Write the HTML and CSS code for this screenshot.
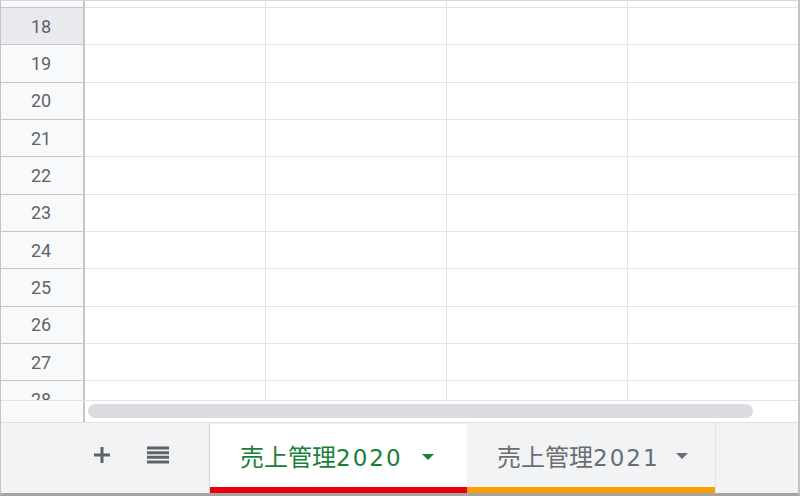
FILE: index.html
```html
<!DOCTYPE html>
<html lang="ja">
<head>
<meta charset="utf-8">
<link rel="stylesheet" href="styles.css">
</head>
<body>
<div class="sheet">
  <div class="grid">
    <div class="row top"><div class="rh"></div><div class="c"></div><div class="c"></div><div class="c"></div><div class="c last"></div></div>
    <div class="row"><div class="rh sel">18</div><div class="c"></div><div class="c"></div><div class="c"></div><div class="c last"></div></div>
    <div class="row"><div class="rh">19</div><div class="c"></div><div class="c"></div><div class="c"></div><div class="c last"></div></div>
    <div class="row"><div class="rh">20</div><div class="c"></div><div class="c"></div><div class="c"></div><div class="c last"></div></div>
    <div class="row"><div class="rh">21</div><div class="c"></div><div class="c"></div><div class="c"></div><div class="c last"></div></div>
    <div class="row"><div class="rh">22</div><div class="c"></div><div class="c"></div><div class="c"></div><div class="c last"></div></div>
    <div class="row"><div class="rh">23</div><div class="c"></div><div class="c"></div><div class="c"></div><div class="c last"></div></div>
    <div class="row"><div class="rh">24</div><div class="c"></div><div class="c"></div><div class="c"></div><div class="c last"></div></div>
    <div class="row"><div class="rh">25</div><div class="c"></div><div class="c"></div><div class="c"></div><div class="c last"></div></div>
    <div class="row"><div class="rh">26</div><div class="c"></div><div class="c"></div><div class="c"></div><div class="c last"></div></div>
    <div class="row"><div class="rh">27</div><div class="c"></div><div class="c"></div><div class="c"></div><div class="c last"></div></div>
    <div class="row"><div class="rh">28</div><div class="c"></div><div class="c"></div><div class="c"></div><div class="c last"></div></div>
  </div>
  <div class="hscroll">
    <div class="rh-blank"></div>
    <div class="track"><div class="thumb"></div></div>
  </div>
  <div class="tabbar">
    <div class="tools">
      <svg class="ico plus" width="18" height="18" viewBox="0 0 18 18"><path d="M9 1v16M1 9h16" stroke="#5f6368" stroke-width="3" fill="none"/></svg>
      <svg class="ico menu" width="22" height="18" viewBox="0 0 22 18"><path d="M0 2h22M0 6.7h22M0 11.3h22M0 16h22" stroke="#5f6368" stroke-width="3" fill="none"/></svg>
    </div>
    <div class="tab active">
      <span class="name">売上管理<span class="num">2020</span></span>
      <span class="caret"></span>
    </div>
    <div class="tab second">
      <span class="name">売上管理<span class="num">2021</span></span>
      <span class="caret"></span>
    </div>
    <div class="rest"></div>
  </div>
</div>
</body>
</html>
```
FILE: styles.css
```css
html, body {
  margin: 0;
  padding: 0;
  background: #ffffff;
}
.sheet {
  width: 800px;
  height: 496px;
  box-sizing: border-box;
  border-top: 1px solid #d6d6d6;
  border-left: 1px solid #c4c4c4;
  border-right: 2px solid #c4c4c4;
  border-bottom: 3px solid #a4a4a4;
  display: flex;
  flex-direction: column;
  overflow: hidden;
  font-family: Roboto, "Liberation Sans", Arial, sans-serif;
}
.grid {
  height: 399px;
  overflow: hidden;
  flex: none;
}
.row {
  display: flex;
  height: 37.33px;
  box-sizing: border-box;
}
.row.top {
  height: 7px;
}
.rh {
  width: 84px;
  flex: none;
  box-sizing: border-box;
  background: #f8f9fa;
  border-right: 2px solid #c6c6c6;
  border-bottom: 1px solid #c6c6c6;
  color: #5f6368;
  font-size: 18px;
  display: flex;
  align-items: center;
  justify-content: center;
  padding-right: 2px;
}
.rh.sel {
  background: #e8eaed;
}
.c {
  width: 181px;
  flex: none;
  box-sizing: border-box;
  border-right: 1px solid #e2e3e3;
  border-bottom: 1px solid #e2e3e3;
}
.c.last {
  flex: 1;
  border-right: none;
}
.hscroll {
  height: 22px;
  flex: none;
  display: flex;
  border-top: 1px solid #e2e3e3;
  box-sizing: border-box;
}
.rh-blank {
  width: 84px;
  flex: none;
  box-sizing: border-box;
  background: #f8f9fa;
  border-right: 2px solid #c6c6c6;
}
.track {
  flex: 1;
  padding: 3px 0 0 3px;
}
.thumb {
  width: 665px;
  height: 14px;
  border-radius: 7px;
  background: #dadce0;
}
.tabbar {
  flex: 1;
  display: flex;
  background: #f1f3f4;
  border-top: 1px solid #e0e0e0;
}
.tools {
  width: 209px;
  flex: none;
  display: flex;
  align-items: center;
  padding-bottom: 6px;
  box-sizing: border-box;
}
.ico.plus {
  margin-left: 92px;
}
.ico.menu {
  margin-left: 36px;
}
.tab {
  display: flex;
  align-items: center;
  box-sizing: border-box;
  padding: 0 0 6px 30px;
  position: relative;
  font-family: "Noto Sans CJK JP", "Noto Sans", sans-serif;
  font-size: 24px;
}
.tab::after {
  content: "";
  position: absolute;
  left: 0;
  right: 0;
  bottom: 0;
  height: 6px;
}
.tab.active {
  width: 257px;
  background: #ffffff;
  color: #188038;
  margin-top: 1px;
  box-shadow: -1px 0 1px rgba(0,0,0,0.12);
}
.tab.active::after {
  background: #e8000b;
}
.tab.second {
  width: 249px;
  color: #6a6e72;
  border-right: 1px solid #e3e5e6;
}
.tab.second::after {
  background: #f9a000;
}
.num {
  font-family: "DejaVu Sans", "Noto Sans", sans-serif;
  font-size: 23px;
  letter-spacing: 2px;
}
.tab.active .caret {
  margin-left: 19px;
}
.caret {
  width: 0;
  height: 0;
  border-left: 6px solid transparent;
  border-right: 6px solid transparent;
  border-top: 6px solid currentColor;
  margin-left: 16px;
  margin-top: 2px;
}
.rest {
  flex: 1;
}
```
